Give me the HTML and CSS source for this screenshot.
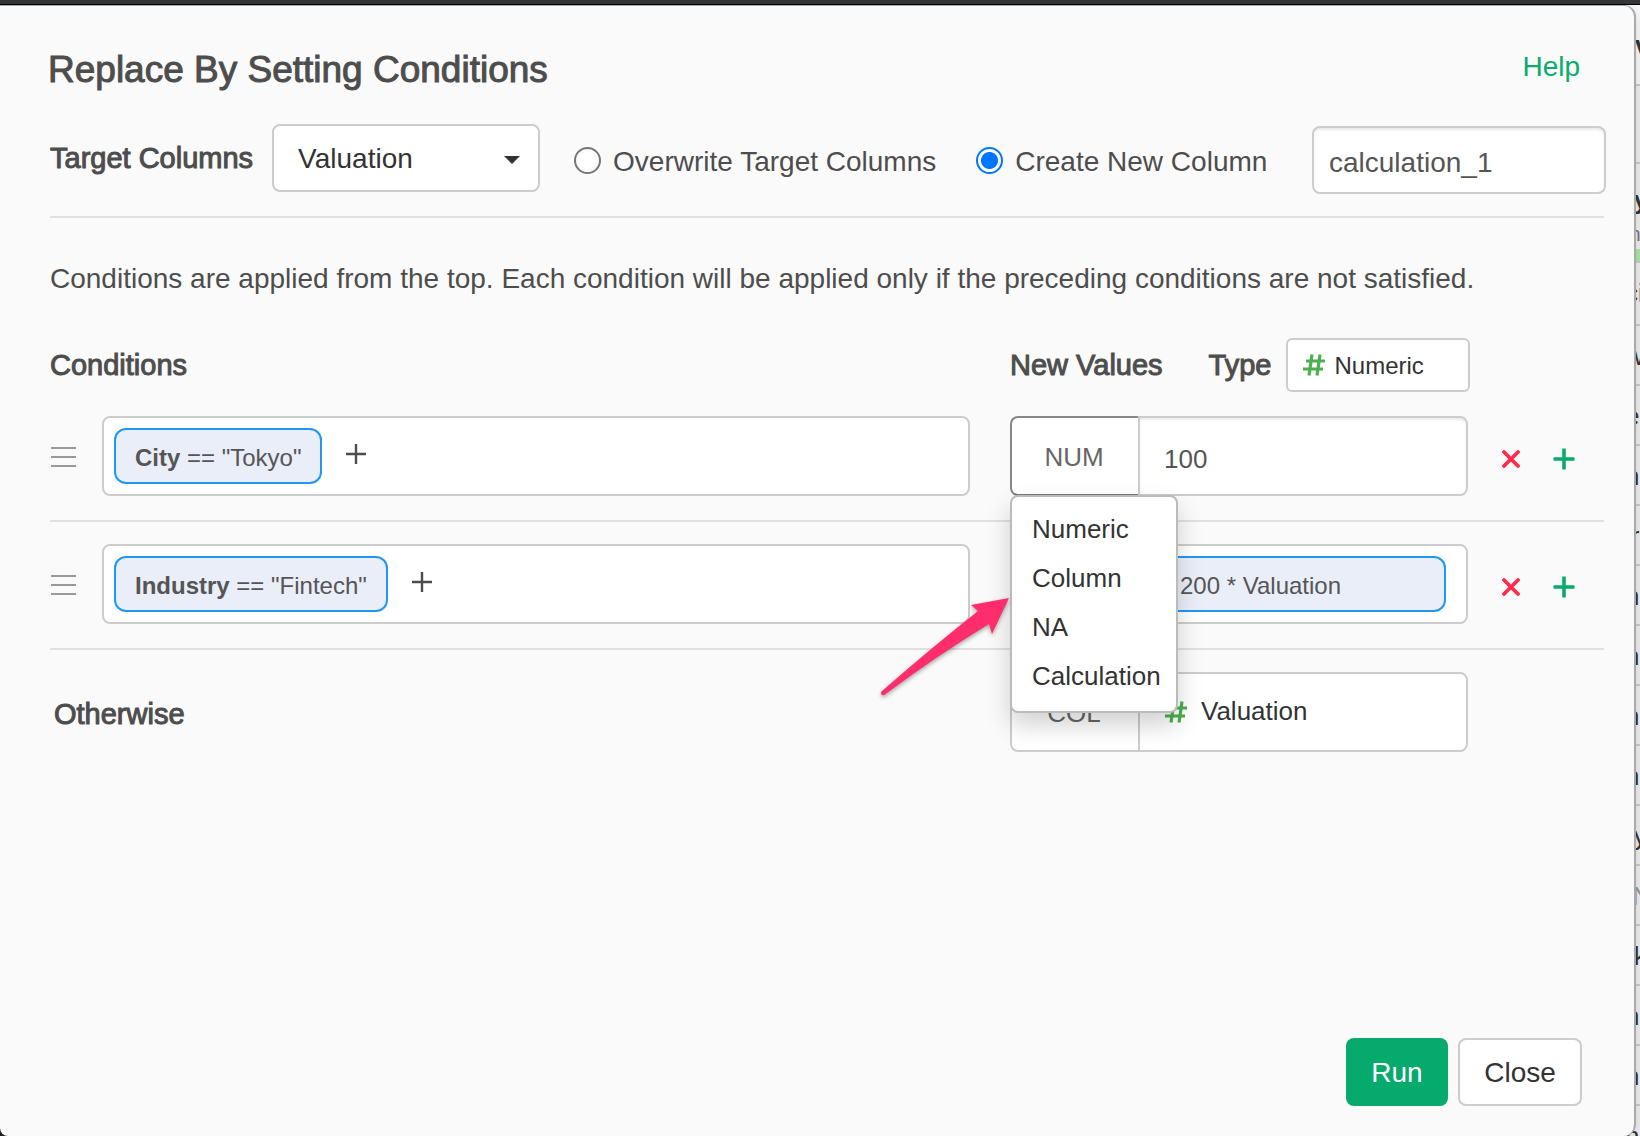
FILE: index.html
```html
<!DOCTYPE html>
<html lang="en">
<head>
<meta charset="utf-8">
<meta name="viewport" content="width=device-width, initial-scale=1">
<title>Replace By Setting Conditions</title>
<link rel="stylesheet" href="styles.css">
</head>
<body>
<svg class="sprite" aria-hidden="true">
  <symbol id="hash" viewBox="0 0 22 22"><path d="M9 .5 6 21.500M17 .5 14 21.500M3 7H22M0 15H20" fill="none" stroke="currentColor" stroke-width="3.200"/></symbol>
  <symbol id="plus" viewBox="0 0 22 22"><path d="M11 .5V21.500M.5 11H21.500" fill="none" stroke="currentColor" stroke-width="3.600"/></symbol>
  <symbol id="thin-plus" viewBox="0 0 20 20"><path d="M10 0V20M0 10H20" fill="none" stroke="currentColor" stroke-width="2.400"/></symbol>
  <symbol id="cross" viewBox="0 0 18 18"><path d="M2 2 16 16M16 2 2 16" fill="none" stroke="currentColor" stroke-width="3.800" stroke-linecap="round"/></symbol>
  <symbol id="grip" viewBox="0 0 26 22"><path d="M1 2H26M1 11H26M1 20H26" fill="none" stroke="currentColor" stroke-width="2"/></symbol>
</svg>
<div class="topbar"></div>
<div class="workspace">
  <main class="dialog">
    <header class="dialog-header">
      <h1 class="title">Replace By Setting Conditions</h1>
      <a class="help" href="#help">Help</a>
    </header>

    <div class="toolbar">
      <label class="heading" for="target">Target Columns</label>
      <div class="select-wrap">
        <select class="target" id="target"><option>Valuation</option></select>
        <svg class="caret" viewBox="0 0 16 8" aria-hidden="true"><path d="M0 0H16L8 8Z" fill="currentColor"/></svg>
      </div>
      <div class="output">
        <label class="choice"><input class="radio" type="radio" name="output"><span>Overwrite Target Columns</span></label>
        <label class="choice"><input class="radio" type="radio" name="output" checked><span>Create New Column</span></label>
        <input class="field column-name" type="text" value="calculation_1" aria-label="New column name">
      </div>
    </div>

    <p class="note">Conditions are applied from the top. Each condition will be applied only if the preceding conditions are not satisfied.</p>

    <div class="columns">
      <h2 class="heading">Conditions</h2>
      <div class="values-head">
        <h2 class="heading">New Values</h2>
        <label class="heading type-label" for="type">Type</label>
        <div class="type-wrap">
          <svg class="hash"><use href="#hash"/></svg>
          <select class="type" id="type"><option>Numeric</option></select>
        </div>
      </div>
    </div>

    <div class="row">
      <svg class="grip"><use href="#grip"/></svg>
      <div class="box condition">
        <button class="chip"><b>City</b> == "Tokyo"</button>
        <button class="add" aria-label="Add condition"><svg><use href="#thin-plus"/></svg></button>
      </div>
      <div class="value">
        <button class="kind kind-open" aria-expanded="true">NUM</button>
        <input class="field amount" type="text" value="100" aria-label="New value">
        <ul class="menu">
          <li><button>Numeric</button></li>
          <li><button>Column</button></li>
          <li><button>NA</button></li>
          <li><button>Calculation</button></li>
        </ul>
        <svg class="arrow" viewBox="0 0 136 106" aria-hidden="true"><path d="M131 6 93 13 100 19Q52 57 4 99Q2 101 4 103Q6 104 9 101Q60 63 111 32L114 42Z" fill="#ff2d6b"/></svg>
      </div>
      <div class="actions">
        <button class="remove" aria-label="Remove"><svg><use href="#cross"/></svg></button>
        <button class="insert" aria-label="Insert"><svg><use href="#plus"/></svg></button>
      </div>
    </div>

    <div class="row">
      <svg class="grip"><use href="#grip"/></svg>
      <div class="box condition">
        <button class="chip"><b>Industry</b> == "Fintech"</button>
        <button class="add" aria-label="Add condition"><svg><use href="#thin-plus"/></svg></button>
      </div>
      <div class="value">
        <button class="kind" aria-label="Value kind"></button>
        <div class="box result">
          <button class="chip chip-wide">200 * Valuation</button>
        </div>
      </div>
      <div class="actions">
        <button class="remove" aria-label="Remove"><svg><use href="#cross"/></svg></button>
        <button class="insert" aria-label="Insert"><svg><use href="#plus"/></svg></button>
      </div>
    </div>

    <div class="row row-last">
      <label class="heading otherwise" for="fallback">Otherwise</label>
      <div class="value">
        <button class="kind">COL</button>
        <div class="fallback-wrap">
          <svg class="hash"><use href="#hash"/></svg>
          <select class="fallback" id="fallback"><option>Valuation</option></select>
        </div>
      </div>
    </div>

    <footer class="footer">
      <button class="btn btn-run">Run</button>
      <button class="btn btn-close">Close</button>
    </footer>
  </main>

  <aside class="sheet" aria-hidden="true">
    <div class="sheet-top"><b>rv</b></div>
    <div class="sheet-gap"></div>
    <div class="sheet-head"><b>ty</b><span>in:</span><i></i></div>
    <div class="cell cell-first">ci</div>
    <div class="cell">rw</div>
    <div class="cell">er</div>
    <div class="cell">n</div>
    <div class="cell">ir</div>
    <div class="cell">nc</div>
    <div class="cell">n</div>
    <div class="cell">n</div>
    <div class="cell">nc</div>
    <div class="cell">ry</div>
    <div class="cell cell-na">tN</div>
    <div class="cell">rk</div>
    <div class="cell">n</div>
    <div class="cell">n</div>
    <div class="cell cell-rest">n</div>
  </aside>
</div>
</body>
</html>
```

FILE: styles.css
```css
* { box-sizing: border-box; }

body {
  margin: 0;
  min-height: 100vh;
  display: flex;
  flex-direction: column;
  background: #222;
  color: #4d4d4d;
  font: 28px/40px "Helvetica Neue", "Liberation Sans", Arial, sans-serif;
}

button, input, select {
  margin: 0;
  font: inherit;
  color: inherit;
}

button {
  padding: 0;
  border: 0;
  background: none;
}

.sprite { position: absolute; width: 0; height: 0; }

.topbar {
  height: 5px;
  background: #343537;
  border-bottom: 1px solid #000;
}

.workspace {
  flex: 1;
  display: flex;
  overflow: hidden;
}

/* Dialog */

.dialog {
  position: relative;
  z-index: 1;
  flex: 1;
  display: flex;
  flex-direction: column;
  padding: 42px 30px 30px 50px;
  background: #fafafa;
  border-top: 1px solid #a9a9a9;
  border-right: 2px solid #a9a9a9;
  border-radius: 0 12px 12px 8px;
  box-shadow: 0 4px 16px rgba(0, 0, 0, .15);
}

.dialog-header {
  display: flex;
  justify-content: space-between;
  padding-right: 24px;
  margin: 0 0 32px -2px;
}

.title, .heading {
  margin: 0;
  font-weight: 400;
  -webkit-text-stroke: 1px currentColor;
  white-space: nowrap;
}

.title { font-size: 37px; line-height: 44px; }
.heading { font-size: 29px; line-height: 40px; }

.help {
  line-height: 38px;
  color: #0aab6c;
  text-decoration: none;
}

.toolbar {
  display: flex;
  align-items: flex-start;
  padding-bottom: 22px;
  border-bottom: 2px solid #e0e0e0;
}

.toolbar > .heading { padding-top: 14px; }

.select-wrap {
  position: relative;
  margin-left: 19px;
}

.target {
  display: block;
  appearance: none;
  width: 268px;
  height: 68px;
  padding: 2px 24px 0;
  color: #333;
  background: #fff;
  border: 2px solid #ccc;
  border-radius: 8px;
}

.caret {
  position: absolute;
  right: 20px;
  top: 32px;
  width: 16px;
  height: 8px;
  color: #333;
}

.output {
  flex: 1;
  display: flex;
  align-items: center;
  gap: 40px;
  margin: 2px -2px 0 34px;
}

.choice {
  display: flex;
  align-items: center;
  gap: 12px;
  white-space: nowrap;
}

.choice span { padding-top: 4px; }

.radio {
  appearance: none;
  width: 27px;
  height: 27px;
  padding: 3px;
  background: #fff content-box;
  border: 2px solid #767676;
  border-radius: 50%;
}

.radio:checked {
  border-color: #0075ff;
  background: radial-gradient(#0075ff 8px, #fff 9px);
}

.field {
  padding: 6px 16px 0 15px;
  color: #555;
  background: #fff;
  border: 2px solid #ccc;
  box-shadow: inset 0 2px 2px rgba(0, 0, 0, .08);
}

.column-name {
  width: 294px;
  height: 68px;
  margin-left: auto;
  border-radius: 8px;
}

.note { margin: 41px 0 39px; }

/* Condition rows */

.columns, .row {
  display: grid;
  grid-template-columns: 52px 1fr 458px 136px;
}

.columns {
  align-items: center;
  margin-bottom: 2px;
}

.columns > .heading { grid-column: 1 / 3; }

.values-head {
  display: flex;
  align-items: center;
  grid-column: 3 / 5;
}

.type-label { margin-left: 46px; }

.type-wrap, .fallback-wrap {
  display: grid;
  align-items: center;
}

.type-wrap { margin-left: 15px; }

.hash {
  grid-area: 1 / 1;
  z-index: 1;
  width: 22px;
  height: 22px;
  margin-left: 17px;
  color: #4caf50;
  pointer-events: none;
}

.type, .fallback {
  grid-area: 1 / 1;
  appearance: none;
  color: #333;
  background: #fff;
  border: 2px solid #ccc;
}

.type {
  width: 184px;
  height: 54px;
  padding: 2px 0 0 46px;
  font-size: 24px;
  border-radius: 6px;
}

.row {
  align-items: center;
  padding: 22px 0 24px;
  border-bottom: 2px solid #e0e0e0;
}

.row-last { border-bottom: 0; }

.grip {
  width: 26px;
  height: 22px;
  margin-top: 2px;
  color: #999;
}

.box {
  display: flex;
  align-items: center;
  height: 80px;
  padding: 0 10px;
  background: #fff;
  border: 2px solid #ccc;
  border-radius: 8px;
}

.condition { margin-right: 40px; }

.chip {
  height: 56px;
  padding: 4px 19px 0;
  font-size: 24px;
  line-height: 32px;
  text-align: left;
  white-space: nowrap;
  color: #555;
  background: #e9eef9;
  border: 2px solid #2196f3;
  border-radius: 12px;
}

.add {
  display: flex;
  margin: 0 0 4px 24px;
}

.add svg { width: 20px; height: 20px; }

.value {
  position: relative;
  display: flex;
  font-size: 26px;
}

.kind {
  width: 130px;
  height: 80px;
  padding: 2px 2px 0 0;
  color: #666;
  background: #fff;
  border: 2px solid #ccc;
  border-radius: 8px 0 0 8px;
}

.kind-open { border-color: #888 #ccc #777 #888; }

.amount, .result, .fallback-wrap {
  flex: 1;
  min-width: 0;
  height: 80px;
  margin-left: -2px;
}

.amount { padding: 6px 16px 0 24px; }

.amount, .result, .fallback { border-radius: 0 8px 8px 0; }

.result { padding: 0 20px 0 19px; }

.chip-wide { flex: 1; }

.fallback {
  height: 80px;
  padding: 0 0 2px 61px;
}

.fallback-wrap .hash { margin-left: 27px; }

.actions {
  display: flex;
  align-items: center;
  gap: 33px;
  padding: 6px 0 0 34px;
}

.actions button { display: flex; }
.remove { color: #ff2d4b; }
.insert { color: #0aab6c; }
.remove svg { width: 18px; height: 18px; }
.insert svg { width: 22px; height: 22px; }

.otherwise {
  grid-column: 1 / 3;
  padding: 4px 0 0 4px;
}

.menu {
  position: absolute;
  z-index: 2;
  top: 79px;
  left: 0;
  width: 168px;
  margin: 0;
  padding: 7px 0 11px;
  list-style: none;
  background: #fff;
  border: 2px solid #bbb;
  border-radius: 8px;
  box-shadow: 0 12px 24px rgba(0, 0, 0, .18);
}

.menu button {
  display: block;
  width: 100%;
  height: 49px;
  padding-left: 20px;
  text-align: left;
  color: #333;
}

.arrow {
  position: absolute;
  z-index: 3;
  top: 176px;
  left: -132px;
  width: 136px;
  height: 106px;
  filter: drop-shadow(0 2px 2px rgba(0, 0, 0, .35));
}

.footer {
  display: flex;
  justify-content: flex-end;
  gap: 10px;
  margin-top: auto;
  padding-right: 22px;
}

.btn {
  height: 68px;
  padding-top: 2px;
  border-radius: 8px;
}

.btn-run {
  width: 102px;
  color: #fff;
  background: #06aa6d;
}

.btn-close {
  width: 124px;
  color: #333;
  background: #fff;
  border: 2px solid #ccc;
}

/* Data sheet behind the dialog */

.sheet {
  display: flex;
  flex-direction: column;
  width: 15px;
  margin-left: -11px;
  overflow: hidden;
  background: #f0f0f0;
  color: #333;
  font-size: 26px;
  white-space: nowrap;
}

.sheet > * { flex: none; border-bottom: 2px solid #ccc; }
.sheet-top { height: 81px; padding-top: 20px; background: #fafafa; }
.sheet-gap { height: 78px; }

.sheet-head {
  display: flex;
  flex-direction: column;
  height: 99px;
  padding-top: 16px;
}

.sheet-head span { font-size: 20px; line-height: 28px; color: #777; }
.sheet-head i { width: 100%; height: 12px; margin-top: auto; background: #a8eda1; }
.sheet .cell { height: 60px; padding-top: 10px; }
.sheet .cell-first { height: 63px; }
.sheet .cell-rest { flex: 1 1 0; min-height: 0; border: 0; overflow: hidden; }
.cell-na { color: #999; }
```
